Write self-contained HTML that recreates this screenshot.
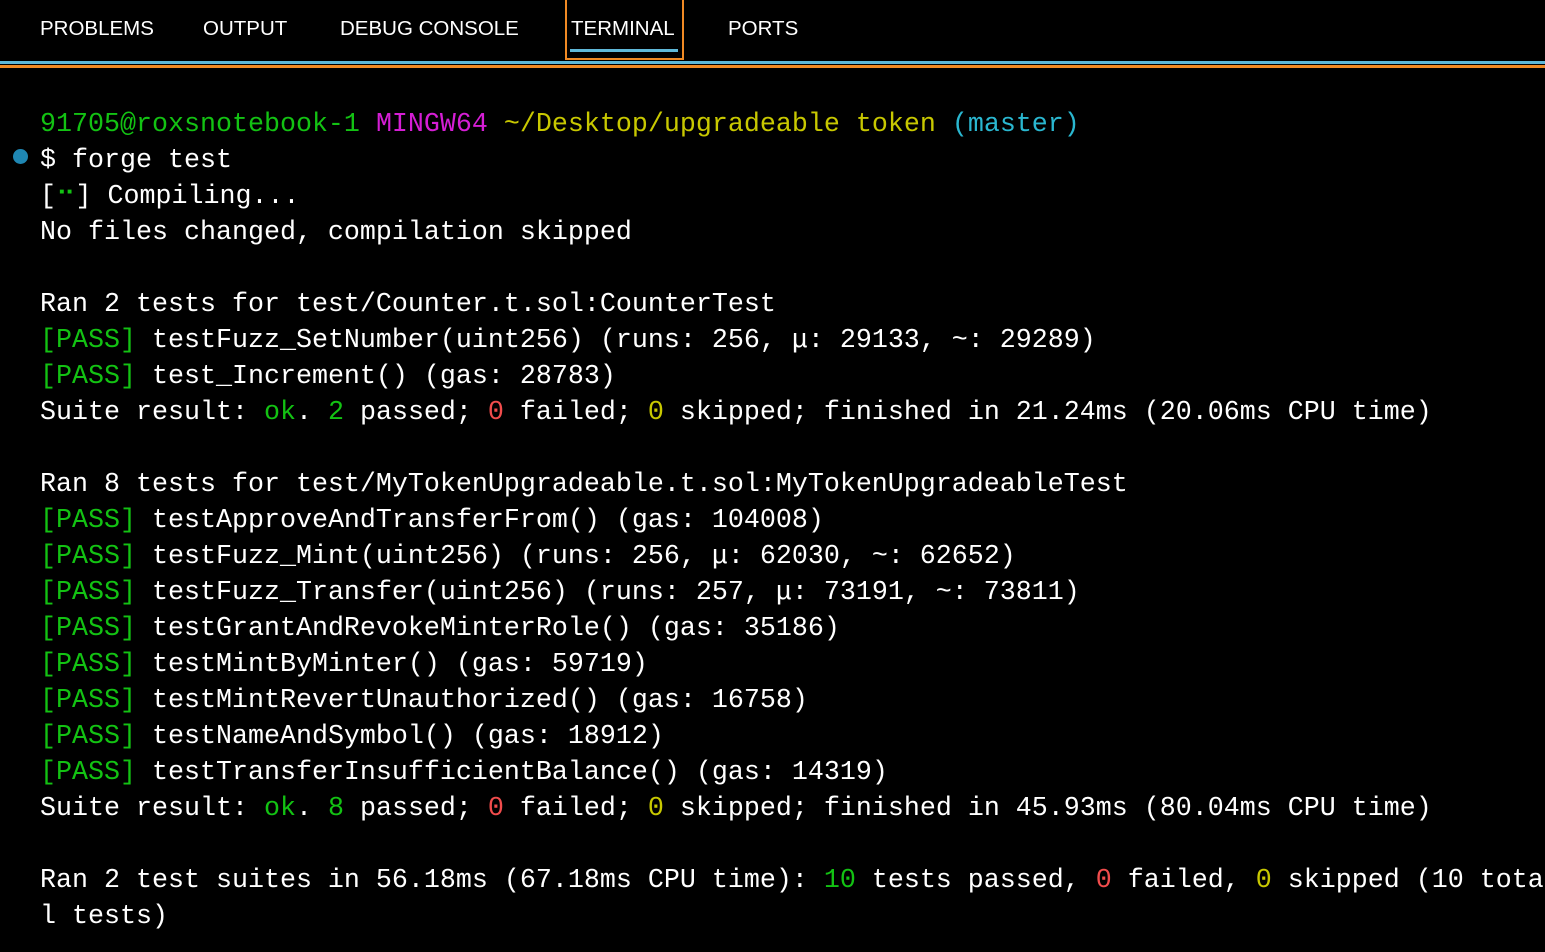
<!DOCTYPE html>
<html><head><meta charset="utf-8"><style>
html,body{margin:0;padding:0;background:#000;width:1545px;height:952px;overflow:hidden}
.tabs{position:absolute;top:0;left:0;width:1545px;height:62px;font-family:"Liberation Sans",sans-serif;font-size:20.5px;color:#fff}
.tab{position:absolute;top:17px}
.term{position:absolute;left:565px;top:-2px;width:119px;height:62px;border:2px solid #f08a24;border-top:none;box-sizing:border-box}
.ul{position:absolute;left:570px;top:49px;width:108px;height:3px;background:#5fb8d8}
.l1{position:absolute;top:61px;left:0;width:1545px;height:3px;background:#5fb8d8}
.l2{position:absolute;top:65px;left:0;width:1545px;height:3px;background:#f08a24}
pre{position:absolute;top:107px;left:40px;margin:0;font-family:"Liberation Mono",monospace;font-size:26.67px;line-height:36px;color:#fff;white-space:pre}
.g{color:#13c213}.m{color:#d51ed5}.y{color:#c8c800}.c{color:#2ab7d0}.r{color:#f14c4c}
.dot{position:absolute;left:13px;top:149px;width:15px;height:15px;border-radius:50%;background:#1f87b3}
</style></head><body>
<div class="tabs">
<span class="tab" style="left:40px">PROBLEMS</span>
<span class="tab" style="left:203px">OUTPUT</span>
<span class="tab" style="left:340px">DEBUG CONSOLE</span>
<span class="tab" style="left:571px">TERMINAL</span>
<span class="tab" style="left:728px">PORTS</span>
<div class="term"></div><div class="ul"></div>
</div>
<div class="l1"></div><div class="l2"></div>
<div class="dot"></div>
<pre><span class="g">91705@roxsnotebook-1</span> <span class="m">MINGW64</span> <span class="y">~/Desktop/upgradeable token</span> <span class="c">(master)</span>
$ forge test
[<span class="g">⠒</span>] Compiling...
No files changed, compilation skipped

Ran 2 tests for test/Counter.t.sol:CounterTest
<span class="g">[PASS]</span> testFuzz_SetNumber(uint256) (runs: 256, μ: 29133, ~: 29289)
<span class="g">[PASS]</span> test_Increment() (gas: 28783)
Suite result: <span class="g">ok</span>. <span class="g">2</span> passed; <span class="r">0</span> failed; <span class="y">0</span> skipped; finished in 21.24ms (20.06ms CPU time)

Ran 8 tests for test/MyTokenUpgradeable.t.sol:MyTokenUpgradeableTest
<span class="g">[PASS]</span> testApproveAndTransferFrom() (gas: 104008)
<span class="g">[PASS]</span> testFuzz_Mint(uint256) (runs: 256, μ: 62030, ~: 62652)
<span class="g">[PASS]</span> testFuzz_Transfer(uint256) (runs: 257, μ: 73191, ~: 73811)
<span class="g">[PASS]</span> testGrantAndRevokeMinterRole() (gas: 35186)
<span class="g">[PASS]</span> testMintByMinter() (gas: 59719)
<span class="g">[PASS]</span> testMintRevertUnauthorized() (gas: 16758)
<span class="g">[PASS]</span> testNameAndSymbol() (gas: 18912)
<span class="g">[PASS]</span> testTransferInsufficientBalance() (gas: 14319)
Suite result: <span class="g">ok</span>. <span class="g">8</span> passed; <span class="r">0</span> failed; <span class="y">0</span> skipped; finished in 45.93ms (80.04ms CPU time)

Ran 2 test suites in 56.18ms (67.18ms CPU time): <span class="g">10</span> tests passed, <span class="r">0</span> failed, <span class="y">0</span> skipped (10 tota
l tests)</pre>
</body></html>
